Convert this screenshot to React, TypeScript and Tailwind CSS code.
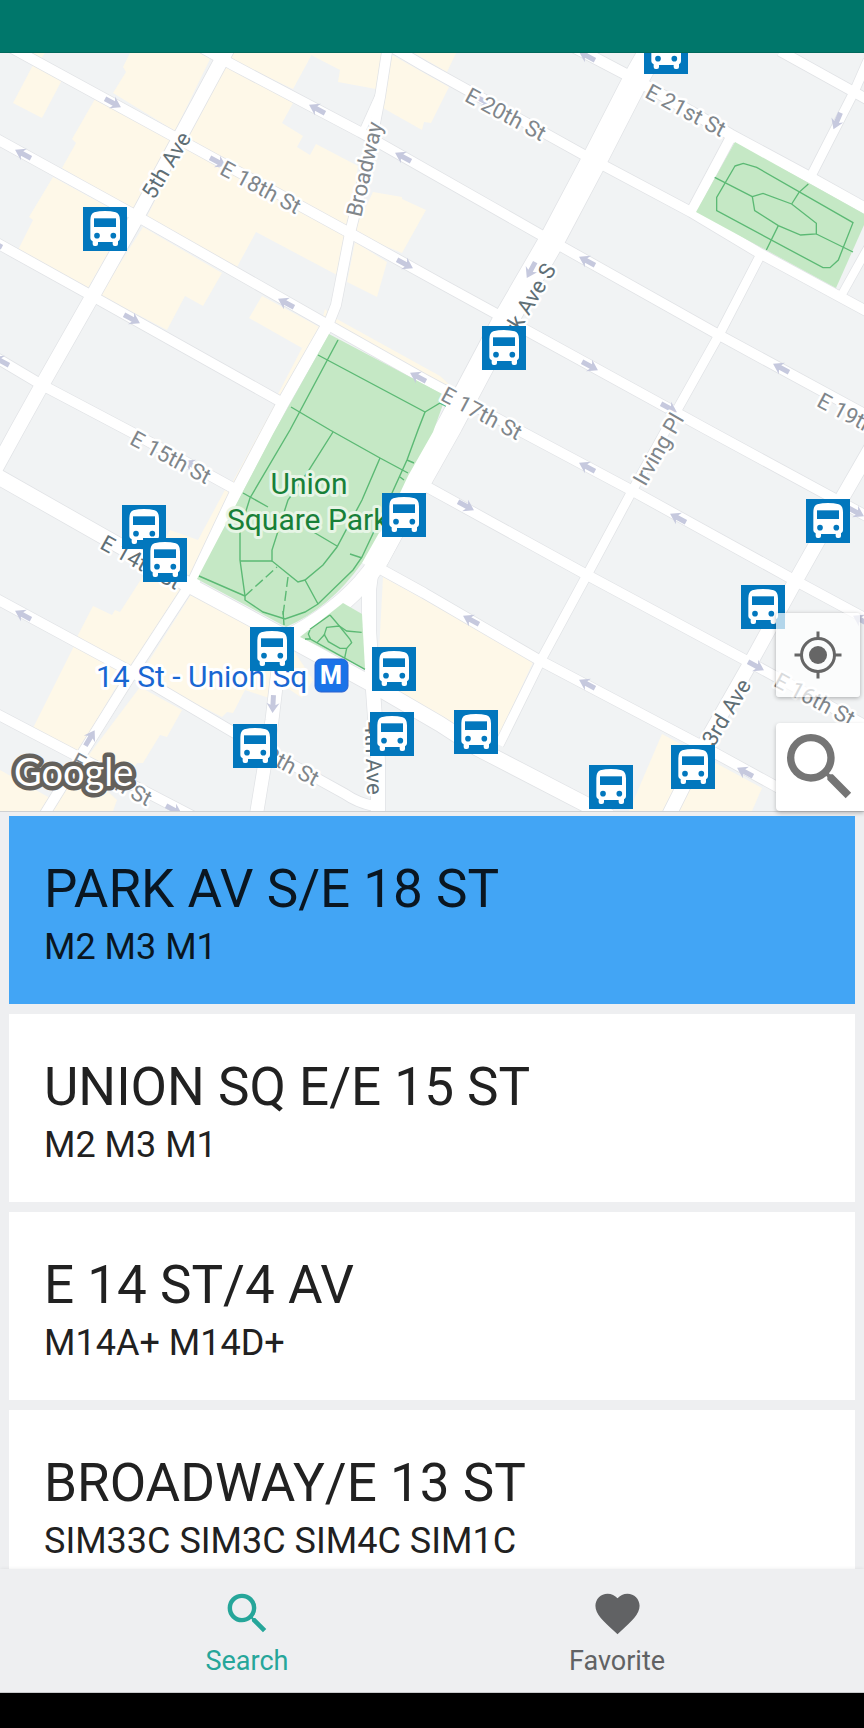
import { useState } from "react";

type Point = [number, number];

const BLOCKS = [
  "33,65 62,80 42,118 13,103",
  "18,53 45,53 40,60",
  "130,53 213,53 175,131 113,93 126,72 123,67",
  "95,99 172,140 133,210 62,168 76,143 72,139",
  "53,177 128,218 88,288 18,250 33,220 29,217",
  "227,65 293,103 282,123 303,136 297,147 310,155 316,144 358,166 350,230 185,140",
  "230,45 311,45 311,56 293,89 232,60",
  "311,45 387,45 376,89 338,82 340,70 311,55",
  "392,55 449,87 431,123 424,122 422,130 383,108",
  "400,45 460,45 447,72",
  "373,192 402,197 402,199 426,210 402,253 353,233",
  "355,242 387,262 377,297 347,282",
  "182,143 347,237 337,275 256,232 237,267 147,217",
  "143,227 222,273 203,306 185,296 167,330 100,295",
  "262,296 325,330 302,348 249,318",
  "302,348 322,325 290,398 278,394",
  "322,320 325,309 335,318 440,376 450,385 430,382",
  "276,402 282,408 241,490 232,483",
  "230,492 190,583 143,577 170,530 198,540 226,488",
  "147,570 185,593 133,668 77,637 93,606 112,615 115,610 120,612",
  "192,593 283,643 275,700 245,690 233,713 227,712 222,717 140,675",
  "280,683 302,698 313,680 290,645",
  "77,640 125,672 78,752 33,728",
  "140,687 182,710 167,737 160,735 143,763 137,763 125,785 85,760",
  "0,770 50,798 43,811 0,811",
  "80,765 117,800 113,811 50,811",
  "383,577 534,660 497,740 480,745 377,690",
  "345,602 366,582 364,590",
  "662,734 762,788 752,811 629,811",
];

const ROADS: { d: string; w: number }[] = [
  { d: "M780 51L854 92L870 101", w: 10 },
  { d: "M570 45L631 77L731 135L811 178L870 211", w: 11 },
  { d: "M390 46L424 66L584 155L691 212L761 254L870 313", w: 10 },
  { d: "M195 44L233 65L360 132L541 235L719 335L870 417", w: 10 },
  { d: "M10 47L173 136L348 232L440 283L706 429L870 518", w: 10 },
  { d: "M-5 138L133 214L323 322L424 379L524 433L631 490L794 580L870 621", w: 10 },
  { d: "M-5 242L85 292L283 403", w: 10 },
  { d: "M415 482L429 488L587 575L749 662L870 728", w: 10 },
  { d: "M-5 357L42 385L133 433L233 488", w: 10 },
  { d: "M375 566L424 593L539 660L704 747L870 838", w: 10 },
  { d: "M-5 475L187 584L300 645L373 685L440 724L477 748L610 817", w: 15 },
  { d: "M-5 598L128 670L233 732L345 794Q358 803 374 806", w: 10 },
  { d: "M-5 713L75 755L200 820", w: 10 },
  { d: "M228 48L180 137L137 217L92 297L42 385L17 430L-6 472", w: 14 },
  { d: "M388 45L380 97L368 160L350 233L336 305L327 328", w: 10 },
  { d: "M380 92L362 132", w: 6 },
  { d: "M327 326L283 403L237 490L193 583", w: 12 },
  { d: "M193 580L133 672L80 757L43 817", w: 10 },
  { d: "M655 45L637 77L597 155L552 240L504 323L450 425L419 480L371 568", w: 25 },
  { d: "M378 562Q350 605 293 636", w: 18 },
  { d: "M372 567L369 590L369 630L373 690L378 760L378 817", w: 14 },
  { d: "M731 137L691 212", w: 10 },
  { d: "M868 60L854 92L811 176", w: 9 },
  { d: "M870 244L841 296", w: 8 },
  { d: "M761 254L719 335L677 410L631 493L587 575L541 660L499 745", w: 9 },
  { d: "M872 446L841 500L796 580L751 662L704 745L668 817", w: 14 },
  { d: "M281 645L272 720L256 817", w: 13 },
];

const ARROWS: [number, number, number][] = [
  [113, 103, 28], [132, 319, 28], [405, 264, 28], [218, 162, 28], [590, 366, 28],
  [669, 408, 28], [466, 506, 28], [756, 666, 28], [856, 512, 28], [174, 810, 28],
  [23, 154, 208], [317, 109, 208], [403, 157, 208], [286, 303, 208], [1, 361, 208],
  [-6, 243, 208], [418, 377, 208], [587, 56, 208], [587, 261, 208], [781, 368, 208],
  [587, 467, 208], [678, 518, 208], [471, 620, 208], [587, 684, 208], [745, 772, 208],
  [861, 620, 208], [23, 615, 208], [531, 270, 118], [837, 121, 113], [273, 704, 93],
  [90, 738, -59], [484, 101, 28], [192, 465, 208],
];

const STREET_LABELS: { text: string; x: number; y: number; angle: number; major?: boolean }[] = [
  { text: "E 18th St", x: 261, y: 187, angle: 28 },
  { text: "E 20th St", x: 506, y: 114, angle: 28 },
  { text: "E 21st St", x: 686, y: 110, angle: 28 },
  { text: "E 17th St", x: 482, y: 413, angle: 28 },
  { text: "E 19th St", x: 858, y: 419, angle: 28 },
  { text: "E 16th St", x: 815, y: 699, angle: 28 },
  { text: "E 15th St", x: 171, y: 457, angle: 28 },
  { text: "E 14th St", x: 141, y: 562, angle: 29, major: true },
  { text: "E 13th St", x: 279, y: 759, angle: 28 },
  { text: "E 12th St", x: 112, y: 779, angle: 28 },
  { text: "Broadway", x: 364, y: 169, angle: -77 },
  { text: "Irving Pl", x: 658, y: 449, angle: -60 },
  { text: "5th Ave", x: 166, y: 165, angle: -59, major: true },
  { text: "Park Ave S", x: 523, y: 310, angle: -59, major: true },
  { text: "4th Ave", x: 374, y: 758, angle: 88, major: true },
  { text: "3rd Ave", x: 726, y: 712, angle: -59, major: true },
];

const STOP_PINS: Point[] = [
  [644, 30], [83, 207], [482, 326], [382, 493], [122, 505], [143, 538], [250, 627],
  [372, 647], [370, 712], [233, 724], [806, 499], [741, 585], [454, 710], [589, 765], [671, 745],
];

const STOPS = [
  { name: "PARK AV S/E 18 ST", routes: "M2 M3 M1" },
  { name: "UNION SQ E/E 15 ST", routes: "M2 M3 M1" },
  { name: "E 14 ST/4 AV", routes: "M14A+ M14D+" },
  { name: "BROADWAY/E 13 ST", routes: "SIM33C SIM3C SIM4C SIM1C" },
];

function BusPin({ at }: { at: Point }) {
  return (
    <g transform={`translate(${at[0]} ${at[1]}) scale(0.33333)`}>
      <rect width="132" height="132" fill="#0277bd" />
      <path
        fill="#fff"
        d="M22 40Q22 20 34 16Q48 12 66 12Q84 12 98 16Q111 20 111 40V94Q111 100 105 103V111Q105 117 99 117H95Q89 117 89 111V105H45V111Q45 117 39 117H35Q29 117 29 111V103Q22 100 22 94Z"
      />
      <rect x="33" y="34" width="66" height="26" fill="#0277bd" />
      <circle cx="42" cy="86" r="8.500" fill="#0277bd" />
      <circle cx="91" cy="86" r="8.500" fill="#0277bd" />
    </g>
  );
}

function StreetMap() {
  return (
    <svg
      viewBox="0 53 864 758"
      preserveAspectRatio="xMidYMid slice"
      className="block h-auto w-full bg-[#f1f3f4]"
      role="img"
      aria-label="Map of bus stops around Union Square"
    >
      <g fill="#fef8e8">
        {BLOCKS.map((points) => (
          <polygon key={points} points={points} />
        ))}
      </g>
      <g fill="none" stroke="#e1e3e6">
        {ROADS.map((r) => (
          <path key={r.d} d={r.d} strokeWidth={r.w + 1.5} />
        ))}
      </g>
      <g fill="none" stroke="#fff" strokeLinejoin="round">
        {ROADS.map((r) => (
          <path key={r.d} d={r.d} strokeWidth={r.w} />
        ))}
      </g>

      <g fill="#c5e8c5">
        <path d="M329 334L446 396L433 432L408 476L392 510L362 563Q330 608 286 627L197 579L273 434Z" />
        <path d="M343 603L362 614L365 669L300 637Z" />
        <path d="M735 142L868 216L836 288L696 212Z" />
      </g>
      <path d="M461 405L378 560" stroke="#fff" strokeWidth="20" fill="none" />
      <g fill="none" stroke="#5bb974" strokeWidth="1.400">
        <path d="M338 340L290 430L250 498L240 530V560L245 596L245 600L263 612L285 619L305 612L318 604L353 570L362 557L392 493L407 460L418 430L425 412L318 355" />
        <path d="M425 412L440 403L446 406M291 407L330 430L380 458L408 473M407 460L414 463M400 477L404 480" />
        <path d="M333 432L307 473L288 500L272 550V561L298 582L305 580L323 565L337 547L362 500L380 458" />
        <path d="M243 493L268 507M310 530L337 546M350 554L362 558M240 561H272M199 576L245 596M305 580L318 604M283 611L284 625" />
        <path d="M245 596L277 567M288 577L283 615" strokeDasharray="10 4" />
      </g>
      <g transform="translate(0 430) scale(0.33333)" fill="none" stroke="#5bb974" strokeWidth="4">
        <path d="M915 627L930 627L1095 718M990 555L1018 588L1040 603L1085 607M930 600L925 612L932 628M990 555L930 598M952 637L975 612M1040 655L1034 684" />
        <path d="M980 592L1018 588L1050 628L1055 638L1040 655L1020 655L985 635L973 614Z" />
      </g>
      <g transform="translate(424 40) scale(0.33333)" fill="none" stroke="#5bb974" strokeWidth="4">
        <path d="M933 378L958 370L998 382L1287 548L1243 660L1218 683H1197L878 512V472Z" />
        <path d="M985 470L1017 460L1103 492L1177 550V582L1130 585L1063 557L992 512Z" />
        <path d="M872 412L985 470M1177 582L1287 636M1153 432L1125 457L1103 492M1063 557L1027 630" />
      </g>

      <g fill="#c6c9de">
        {ARROWS.map(([x, y, a]) => (
          <path
            key={`${x}-${y}`}
            transform={`translate(${x} ${y}) rotate(${a})`}
            d="M-9 -2.500H1L-1 -6.500L9 0L-1 6.500L1 2.500H-9Z"
          />
        ))}
      </g>

      <g fontSize="22" textAnchor="middle" stroke="#fff" strokeWidth="5" strokeLinejoin="round" paintOrder="stroke">
        {STREET_LABELS.map((l) => (
          <text
            key={l.text}
            transform={`translate(${l.x} ${l.y}) rotate(${l.angle})`}
            y="8"
            fill={l.major ? "#5f6f76" : "#80868b"}
          >
            {l.text}
          </text>
        ))}
      </g>

      <g fontSize="30" strokeWidth="6" strokeLinejoin="round" paintOrder="stroke">
        <g fill="#188038" stroke="#e7f5e6">
          <text x="309" y="494" textAnchor="middle">Union</text>
          <text x="227" y="530">Square Park</text>
        </g>
        <text x="96" y="687" fill="#1967d2" stroke="#fff">14 St - Union Sq</text>
      </g>
      <rect x="315" y="659" width="33" height="33" rx="6" fill="#1a73e8" stroke="#2b62d0" />
      <text x="331" y="684" fontSize="25" fontWeight="800" fill="#fff" textAnchor="middle">M</text>

      {STOP_PINS.map((p) => (
        <BusPin key={p.join()} at={p} />
      ))}

      <text
        x="14"
        y="786"
        fontSize="38"
        fontFamily="Lato, sans-serif"
        fontWeight="400"
        fill="#fff"
        stroke="#64615c"
        strokeWidth="9"
        strokeLinejoin="round"
        paintOrder="stroke"
      >
        Google
      </text>
    </svg>
  );
}

function SearchIcon({ className }: { className: string }) {
  return (
    <svg viewBox="0 0 24 24" fill="currentColor" className={className} aria-hidden="true">
      <path d="M15.500 14h-.79l-.28-.27A6.471 6.471 0 0 0 16 9.500 6.500 6.500 0 1 0 9.500 16c1.610 0 3.090-.59 4.230-1.570l.27.28v.79l5 4.990L20.490 19l-4.990-5zm-6 0C7.010 14 5 11.990 5 9.500S7.010 5 9.500 5 14 7.010 14 9.500 11.990 14 9.500 14z" />
    </svg>
  );
}

function HeartIcon({ className }: { className: string }) {
  return (
    <svg viewBox="0 0 24 24" fill="currentColor" className={className} aria-hidden="true">
      <path d="M12 21.350l-1.450-1.320C5.400 15.360 2 12.280 2 8.500 2 5.420 4.420 3 7.500 3c1.740 0 3.410.81 4.500 2.090C13.090 3.810 14.760 3 16.500 3 19.580 3 22 5.420 22 8.500c0 3.780-3.400 6.860-8.550 11.540L12 21.350z" />
    </svg>
  );
}

function LocateIcon() {
  return (
    <svg viewBox="0 0 48 48" className="size-12" fill="none" stroke="#666" strokeWidth="3" aria-hidden="true">
      <circle cx="24" cy="24" r="16.500" />
      <circle cx="24" cy="24" r="9" fill="#666" stroke="none" />
      <path d="M24 0.500V8M24 40V47.500M0.500 24H8M40 24H47.500" />
    </svg>
  );
}

export default function App() {
  const [selected, setSelected] = useState(0);
  const [tab, setTab] = useState("Search");
  const tabs = [
    { label: "Search", Icon: SearchIcon },
    { label: "Favorite", Icon: HeartIcon },
  ];

  return (
    <div className="flex h-screen flex-col bg-[#eeeff1] font-[Roboto,sans-serif] text-[#212121]">
      <div className="h-[53px] shrink-0 border-b border-[#00695c] bg-[#00776b]" />

      <section className="relative shrink-0 border-b border-[#cfd1d3]">
        <StreetMap />
        <button
          type="button"
          aria-label="My location"
          className="absolute right-1 bottom-[114px] flex size-[84px] items-center justify-center rounded-[3px] bg-white/70 shadow-[0_1px_4px_rgba(0,0,0,0.3)]"
        >
          <LocateIcon />
        </button>
        <button
          type="button"
          aria-label="Search this area"
          className="absolute right-0 bottom-0 size-[88px] rounded-l-[4px] bg-white text-[#757575] shadow-[0_2px_4px_rgba(0,0,0,0.25)]"
        >
          <SearchIcon className="size-[88px]" />
        </button>
      </section>

      <main className="min-h-0 flex-1 overflow-y-auto px-[9px] pt-1 [scrollbar-width:none]">
        <ul className="flex flex-col gap-[10px]">
          {STOPS.map((stop, i) => (
            <li key={stop.name}>
              <button
                type="button"
                onClick={() => setSelected(i)}
                className={`flex h-[188px] w-full flex-col items-start px-[35px] pt-[43px] text-left ${
                  selected === i ? "bg-[#42a5f5] text-[#0a1621]" : "bg-white"
                }`}
              >
                <span className="text-[53px] leading-[60px]">{stop.name}</span>
                <span className="mt-2 text-[36px] leading-[40px]">{stop.routes}</span>
              </button>
            </li>
          ))}
        </ul>
      </main>

      <nav className="flex h-[124px] shrink-0 justify-center border-b border-[#c8c9cb] bg-[#eeeff1] shadow-[0_0_4px_rgba(0,0,0,0.08)]">
        {tabs.map(({ label, Icon }) => (
          <button
            key={label}
            type="button"
            onClick={() => setTab(label)}
            className={`flex max-w-[370px] flex-1 flex-col items-center pt-[18px] text-[27px] leading-[32px] ${
              tab === label ? "text-[#26a69a]" : "text-[#616264]"
            }`}
          >
            <Icon className="size-[53px]" />
            <span className="mt-[5px]">{label}</span>
          </button>
        ))}
      </nav>
      <div className="h-[35px] shrink-0 bg-black" />
    </div>
  );
}
